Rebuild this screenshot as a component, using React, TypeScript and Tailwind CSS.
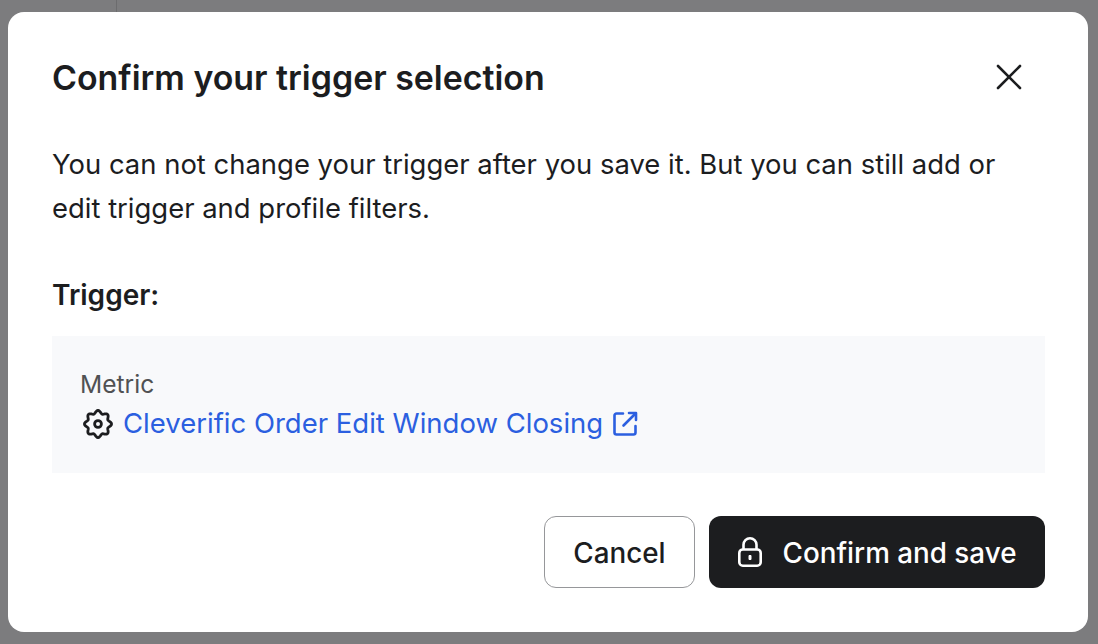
import React from 'react';

// 8 lobed cog outline, lobe on top
const gearPath = () => {
  const pts: string[] = [];
  for (let i = 0; i < 96; i++) {
    const a = (i / 96) * Math.PI * 2 - Math.PI / 2;
    const r = 12.1 + 1.45 * Math.cos(8 * (a + Math.PI / 2));
    pts.push(`${(15 + r * Math.cos(a)).toFixed(2)} ${(15 + r * Math.sin(a)).toFixed(2)}`);
  }
  return `M${pts.join('L')}Z`;
};

const GearIcon = () => (
  <svg width="30" height="30" viewBox="0 0 30 30" fill="none" stroke="#1c1d1f" strokeWidth="2.8" strokeLinejoin="round">
    <path d={gearPath()} />
    <circle cx="15" cy="15" r="3.4" />
  </svg>
);

const ExternalIcon = () => (
  <svg width="26" height="26" viewBox="0 0 26 26" fill="none" stroke="#2b5fe0" strokeWidth="2.6" strokeLinecap="round" strokeLinejoin="round">
    <path d="M11 2.5H4.5a2 2 0 0 0-2 2v17a2 2 0 0 0 2 2h17a2 2 0 0 0 2-2V15" />
    <path d="M17 2h7v7" />
    <path d="M23.5 2.5 11.5 14.5" />
  </svg>
);

const LockIcon = () => (
  <svg width="24" height="30" viewBox="0 0 24 30" fill="none" stroke="#ffffff" strokeWidth="2.6" strokeLinejoin="round">
    <rect x="1.3" y="12.5" width="21.4" height="16.2" rx="3.5" />
    <path d="M5.5 12.5V7.8a6.5 6.5 0 0 1 13 0v4.7" />
    <rect x="11" y="18.5" width="2" height="4" fill="#ffffff" strokeWidth="1" />
  </svg>
);

const CloseIcon = () => (
  <svg width="26" height="26" viewBox="0 0 26 26" fill="none" stroke="#1c1d1f" strokeWidth="2.6" strokeLinecap="round">
    <path d="M2 2l22 22" />
    <path d="M24 2 2 24" />
  </svg>
);

export default function App() {
  return (
    <div className="relative flex h-[644px] w-[1098px] items-start overflow-hidden bg-[#7c7c7e] pl-2 pt-3 font-['Inter',sans-serif] text-[#1c1d1f] antialiased">
      <div className="absolute left-[116px] top-0 h-3 w-px bg-[#6c6c6e]" />

      <div className="flex h-[620px] w-[1080px] flex-col rounded-2xl bg-white pl-11 pr-[43px] pt-[44px]">
        <div className="flex h-11 items-center justify-between">
          <h2 className="text-[33.9px] font-semibold leading-[44px]">Confirm your trigger selection</h2>
          <button className="mb-0.5 mr-[23px]">
            <CloseIcon />
          </button>
        </div>

        <p className="mt-[42px] pr-10 text-[27.45px] leading-[44px]">
          You can not change your trigger after you save it. But you can still add or edit trigger and profile filters.
        </p>

        <div className="mt-[43px] text-[28px] font-semibold leading-[44px]">Trigger:</div>

        <div className="mt-[19px] flex h-[137px] flex-col bg-[#f8f9fb] pl-[28px] pt-[30px]">
          <div className="text-[24.6px] leading-[36px] text-[#505153]">Metric</div>
          <div className="mt-0.5 flex h-[40px] items-center">
            <span className="ml-[3px]">
              <GearIcon />
            </span>
            <a className="ml-[10px] text-[27.5px] text-[#2b5fe0]">Cleverific Order Edit Window Closing</a>
            <span className="ml-[9px]">
              <ExternalIcon />
            </span>
          </div>
        </div>

        <div className="mt-[43px] flex justify-end gap-3.5">
          <button className="h-[72px] w-[151px] rounded-xl border border-[#96979a] bg-white pt-1 text-[27.8px] font-[450]">
            Cancel
          </button>
          <button className="flex h-[72px] w-[336px] items-center justify-center gap-[21px] rounded-xl bg-[#1c1d1f] text-[27.8px] font-[450] text-white">
            <LockIcon />
            <span className="pt-1">Confirm and save</span>
          </button>
        </div>
      </div>
    </div>
  );
}
